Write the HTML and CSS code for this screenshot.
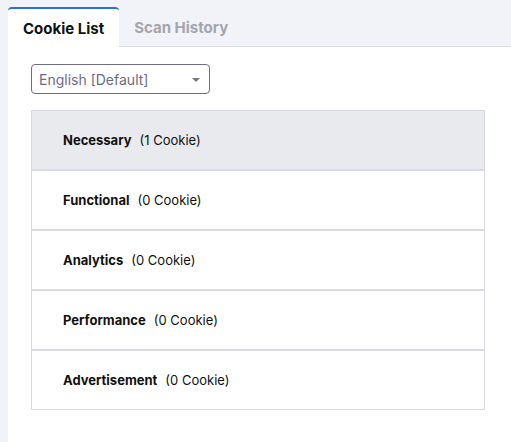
FILE: index.html
```html
<!DOCTYPE html>
<html>
<head>
<meta charset="utf-8">
<link rel="stylesheet" href="styles.css">
</head>
<body>
<div class="page">
  <div class="tabs">
    <div class="tab active">Cookie List</div>
    <div class="tab">Scan History</div>
  </div>
  <div class="content">
    <div class="select">
      <span class="select-text">English [Default]</span>
      <span class="caret"></span>
    </div>
    <div class="list">
      <div class="row selected"><span class="name">Necessary</span><span class="count">(1 Cookie)</span></div>
      <div class="row"><span class="name">Functional</span><span class="count">(0 Cookie)</span></div>
      <div class="row"><span class="name">Analytics</span><span class="count">(0 Cookie)</span></div>
      <div class="row"><span class="name">Performance</span><span class="count">(0 Cookie)</span></div>
      <div class="row"><span class="name">Advertisement</span><span class="count">(0 Cookie)</span></div>
    </div>
  </div>
</div>
</body>
</html>
```

FILE: styles.css
```css
html, body {
  margin: 0;
  padding: 0;
  height: 100%;
}
body {
  background: #f2f3f8;
  font-family: Inter, "Liberation Sans", sans-serif;
}
.page {
  margin-left: 8px;
  height: 100%;
  display: flex;
  flex-direction: column;
}
.tabs {
  display: flex;
  padding-top: 7px;
  border-bottom: 1px solid #dcdde5;
  height: 39px;
  box-sizing: content-box;
}
.tab {
  padding: 2px 15px 0;
  font-size: 15px;
  font-weight: 700;
  color: #a4a5ad;
  display: flex;
  align-items: center;
  justify-content: center;
}
.tab.active {
  background: #fff;
  color: #111;
  border-top: 2px solid #2a6fe3;
  border-radius: 4px 4px 0 0;
  margin-bottom: -1px;
  padding-top: 1px;
}
.content {
  flex: 1;
  background: #fff;
  padding: 17px 26px 0 23px;
}
.select {
  width: 179px;
  height: 30px;
  box-sizing: border-box;
  border: 1px solid #6d6d88;
  border-radius: 4px;
  display: flex;
  align-items: center;
  justify-content: space-between;
  padding: 0 9px 0 7px;
}
.select-text {
  font-size: 14px;
  color: #6c6c84;
}
.caret {
  width: 0;
  height: 0;
  border-left: 4px solid transparent;
  border-right: 4px solid transparent;
  border-top: 4px solid #777;
  margin-top: 1px;
}
.list {
  margin-top: 16px;
  border: 1px solid #d9dae6;
}
.row {
  height: 60px;
  box-sizing: border-box;
  display: flex;
  align-items: center;
  padding-left: 31px;
  font-size: 13px;
  color: #111;
  border-top: 2px solid #d9dae6;
}
.row:first-child {
  border-top: none;
  height: 58px;
}
.row.selected {
  background: #e9eaed;
}
.name {
  font-weight: 700;
  margin-right: 8px;
}
```
